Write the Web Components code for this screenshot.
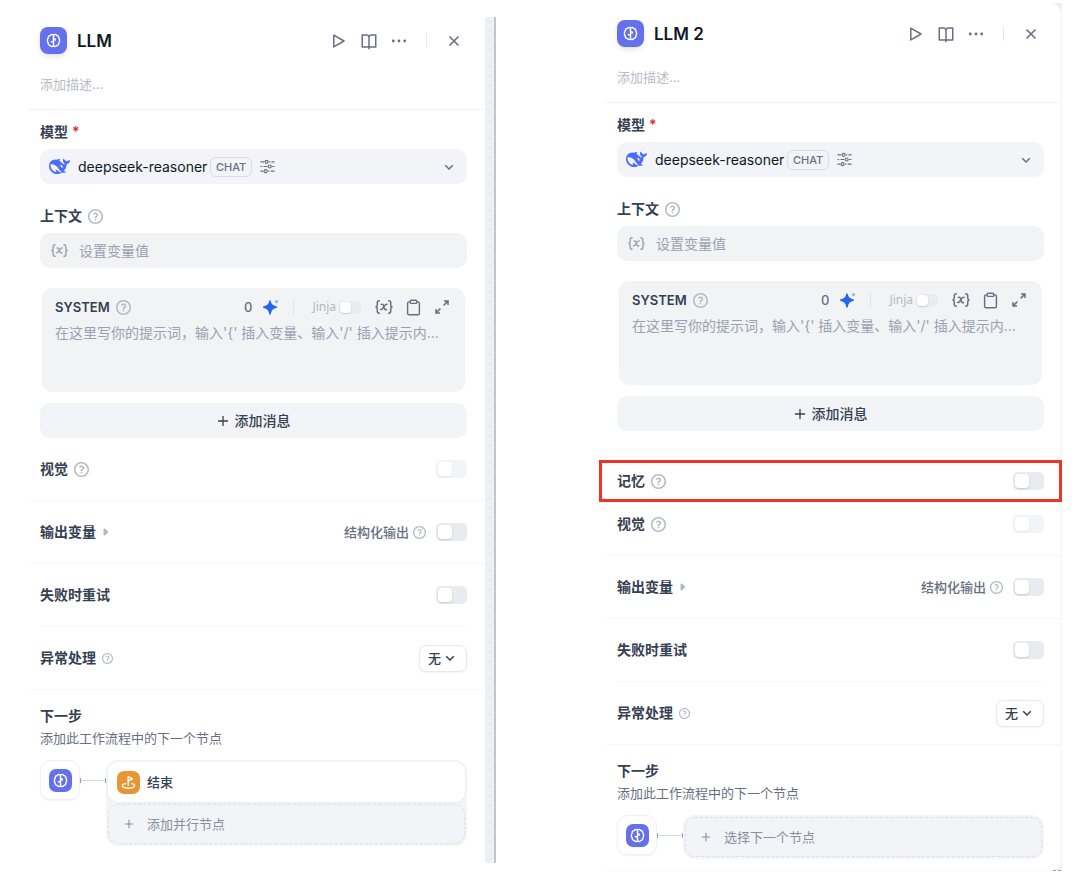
<!DOCTYPE html>
<html lang="zh-CN">
<head>
<meta charset="utf-8">
<meta name="viewport" content="width=device-width, initial-scale=1">
<title>LLM 节点设置</title>
<style>
  body {
    margin: 0;
    background: #fff;
    color: #354052;
    font: 14px/20px Inter, "Noto Sans CJK SC", sans-serif;
    --muted: #676f83;
    --faint: #98a2b2;
    --line: #f6f7f8;
    --fill: #f2f4f7;
  }
</style>
</head>
<body>
<node-compare>
  <node-panel slot="before" heading="LLM" class="first">
    <model-field></model-field>
    <context-field></context-field>
    <prompt-editor></prompt-editor>
    <add-message></add-message>
    <setting-row slot="settings" label="视觉" help="15" disabled></setting-row>
    <setting-row slot="settings" label="输出变量" expandable note="结构化输出"></setting-row>
    <setting-row slot="settings" label="失败时重试" inset></setting-row>
    <setting-row slot="settings" label="异常处理" help="11" choice="无"></setting-row>
    <next-step slot="next">
      <step-item>结束</step-item>
      <step-item add>添加并行节点</step-item>
    </next-step>
  </node-panel>
  <node-panel slot="after" heading="LLM 2" class="second">
    <model-field></model-field>
    <context-field></context-field>
    <prompt-editor></prompt-editor>
    <add-message></add-message>
    <setting-row slot="settings" label="记忆" help="15" marked></setting-row>
    <setting-row slot="settings" label="视觉" help="15" disabled></setting-row>
    <setting-row slot="settings" label="输出变量" expandable note="结构化输出"></setting-row>
    <setting-row slot="settings" label="失败时重试" inset></setting-row>
    <setting-row slot="settings" label="异常处理" help="11" choice="无"></setting-row>
    <next-step slot="next">
      <step-item add>选择下一个节点</step-item>
    </next-step>
  </node-panel>
</node-compare>

<script>
const ICONS = {
  brain: ['0 0 16 16', '<g fill="none" stroke="currentColor" stroke-width="1.5" stroke-linecap="round" stroke-linejoin="round"><path d="M8 2v12M8 2.200C6.900 1.200 5.200 1.400 4.400 2.700 3 2.800 2.100 4 2.400 5.300 1.200 6.400 1.200 9.500 2.400 10.600c-.3 1.400.6 2.600 2 2.700.8 1.300 2.500 1.500 3.600.500 1.100 1 2.800.800 3.600-.500 1.400-.100 2.300-1.300 2-2.700 1.200-1.100 1.200-4.200 0-5.300.300-1.300-.600-2.500-2-2.600C10.800 1.400 9.100 1.200 8 2.200M7.800 9.400H5.700M8.200 6.400h1.600v1.300"/></g>'],
  flag: ['0 0 16 16', '<g fill="none" stroke="currentColor" stroke-width="1.4" stroke-linecap="round" stroke-linejoin="round"><path d="M7.600 11V1.800l4.600 2.300-4.600 2.400M4.700 9.100c-2 .4-3.300 1.200-3.300 2.200 0 1.600 2.900 2.800 6.600 2.800s6.600-1.200 6.600-2.800c0-1-1.200-1.800-3.200-2.200"/></g>'],
  whale: ['0 0 24 24', '<path fill="#4d6bfe" d="M23.748 4.482c-.254-.124-.364.113-.512.234-.051.039-.094.09-.137.136-.372.397-.806.657-1.373.626-.829-.046-1.537.214-2.163.848-.133-.782-.575-1.248-1.247-1.548-.352-.156-.708-.311-.955-.65-.172-.241-.219-.51-.305-.774-.055-.16-.11-.323-.293-.35-.2-.031-.278.136-.356.276-.313.572-.434 1.202-.422 1.84.027 1.436.633 2.58 1.838 3.393.137.093.172.187.129.323-.082.28-.18.552-.266.833-.055.179-.137.217-.329.14a5.526 5.526 0 01-1.736-1.18c-.857-.828-1.631-1.742-2.597-2.458a11.365 11.365 0 00-.689-.471c-.985-.957.13-1.743.388-1.836.27-.098.093-.432-.779-.428-.872.004-1.67.295-2.687.684a3.055 3.055 0 01-.465.137 9.597 9.597 0 00-2.883-.102c-1.885.21-3.39 1.102-4.497 2.623C.082 8.606-.231 10.684.152 12.85c.403 2.284 1.569 4.175 3.36 5.653 1.858 1.533 3.997 2.284 6.438 2.14 1.482-.085 3.133-.284 4.994-1.86.47.234.962.327 1.78.397.63.059 1.236-.03 1.705-.128.735-.156.684-.837.419-.961-2.155-1.004-1.682-.595-2.113-.926 1.096-1.296 2.746-2.642 3.392-7.003.05-.347.007-.565 0-.845-.004-.17.035-.237.23-.256a4.173 4.173 0 001.545-.475c1.396-.763 1.96-2.015 2.093-3.517.02-.23-.004-.467-.247-.588zM11.581 18c-2.089-1.642-3.102-2.183-3.52-2.16-.392.024-.321.471-.235.763.09.288.207.486.371.739.114.167.192.416-.113.603-.673.416-1.842-.14-1.897-.167-1.361-.802-2.5-1.86-3.301-3.307-.774-1.393-1.224-2.887-1.298-4.482-.02-.386.093-.522.477-.592a4.696 4.696 0 011.529-.039c2.132.312 3.946 1.265 5.468 2.774.868.86 1.525 1.887 2.202 2.891.72 1.066 1.494 2.082 2.48 2.914.348.292.625.514.891.677-.802.09-2.14.11-3.054-.614zm1-6.44a.306.306 0 01.415-.287.302.302 0 01.2.288.306.306 0 01-.31.307.303.303 0 01-.304-.308zm3.11 1.596c-.2.081-.399.151-.59.16a1.245 1.245 0 01-.798-.254c-.274-.23-.47-.358-.552-.758a1.73 1.73 0 01.016-.588c.07-.327-.008-.537-.239-.727-.187-.156-.426-.199-.688-.199a.559.559 0 01-.254-.078c-.11-.054-.2-.19-.114-.358.028-.054.16-.186.192-.21.356-.202.767-.136 1.146.016.352.144.618.408 1.001.782.391.451.462.576.685.914.176.265.336.537.445.848.067.195-.019.354-.25.452z"/>'],
  play: ['0 0 18 18', '<path fill="none" stroke="currentColor" stroke-width="1.5" stroke-linejoin="round" d="M3.800 3.100v11.800L14 9z"/>'],
  book: ['0 0 24 24', '<path fill="currentColor" d="M13 21V23H11V21H3C2.448 21 2 20.552 2 20V4C2 3.448 2.448 3 3 3H9C10.195 3 11.267 3.524 12 4.354C12.733 3.524 13.805 3 15 3H21C21.552 3 22 3.448 22 4V20C22 20.552 21.552 21 21 21H13ZM20 19V5H15C13.895 5 13 5.895 13 7V19H20ZM11 19V7C11 5.895 10.105 5 9 5H4V19H11Z"/>'],
  dots: ['0 0 18 18', '<g fill="currentColor"><circle cx="3.300" cy="9" r="1.400"/><circle cx="9" cy="9" r="1.400"/><circle cx="14.700" cy="9" r="1.400"/></g>'],
  close: ['0 0 18 18', '<path fill="none" stroke="currentColor" stroke-width="1.600" d="M4.500 4.500l9 9m0-9l-9 9"/>'],
  help: ['2 2 20 20', '<path fill="currentColor" d="M12 22C6.477 22 2 17.523 2 12C2 6.477 6.477 2 12 2C17.523 2 22 6.477 22 12C22 17.523 17.523 22 12 22ZM12 20C16.418 20 20 16.418 20 12C20 7.582 16.418 4 12 4C7.582 4 4 7.582 4 12C4 16.418 7.582 20 12 20ZM11 15H13V17H11V15ZM13 13.355V14H11V12.5C11 11.948 11.448 11.5 12 11.5C12.828 11.5 13.5 10.828 13.5 10C13.5 9.172 12.828 8.5 12 8.5C11.272 8.5 10.666 9.018 10.529 9.706L8.567 9.313C8.886 7.709 10.302 6.5 12 6.5C13.933 6.5 15.5 8.067 15.5 10C15.5 11.586 14.446 12.925 13 13.355Z"/>'],
  tune: ['0 0 16 16', '<g fill="none" stroke="currentColor" stroke-width="1.300"><path d="M0.500 3h3.800M9.700 3h1.300M12.200 3h3.300M0.500 8h1.800M3.700 8h4M13 8h2.500M0.500 13h3M8.700 13h1.300M11.300 13h4.200"/><circle cx="7" cy="3" r="1.600"/><circle cx="10.300" cy="8" r="1.600"/><circle cx="6" cy="13" r="1.600"/></g>'],
  chevron: ['0 0 10 10', '<path fill="none" stroke="currentColor" stroke-width="1.500" d="M1.200 3.200L5 7l3.800-3.800"/>'],
  variable: ['0 0 18 16', '<g fill="none" stroke="currentColor" stroke-width="1.500" stroke-linecap="round" stroke-linejoin="round"><path d="M4.300 1.800c-1.700 0-2 .8-2 2v2c0 1.200-.4 1.800-1.300 2.200.9.400 1.300 1 1.300 2.200v2c0 1.200.3 2 2 2M13.700 1.800c1.700 0 2 .8 2 2v2c0 1.200.4 1.800 1.300 2.200-.9.400-1.300 1-1.300 2.200v2c0 1.200-.3 2-2 2"/><path d="M6.400 5.400c1.500-.5 2 .3 2.400 2.100.4 2 1 3.700 2.700 3M12 5.200c-1.500-.2-2.200.8-3.100 2.300s-1.700 3.300-3.200 3"/></g>'],
  sparkle: ['0 0 16 16', '<path fill="#2563f0" d="M7 2c.8 3.600 2 5 6.500 6.100C9 9.200 7.800 11 7 15c-.8-4-2-5.800-6.500-6.900C5 7 6.200 5.600 7 2z" stroke="#2563f0" stroke-width="1.300" stroke-linejoin="round"/><circle cx="13.500" cy="2.600" r="1.700" fill="#9db6f8"/>'],
  clipboard: ['0 0 16 18', '<g fill="none" stroke="currentColor" stroke-width="1.500" stroke-linejoin="round"><path d="M4.500 3H3.300A1.600 1.600 0 0 0 1.700 4.600v10.600a1.600 1.600 0 0 0 1.600 1.600h9.400a1.600 1.600 0 0 0 1.600-1.600V4.600A1.600 1.600 0 0 0 12.700 3h-1.200"/><rect x="4.500" y="1.300" width="7" height="3.300" rx="1"/></g>'],
  expand: ['0 0 16 16', '<path fill="none" stroke="currentColor" stroke-width="1.500" d="M10 2h4v4M13.800 2.200L9.600 6.400M2 10v4h4M2.200 13.800l4.200-4.200"/>'],
  plus: ['0 0 12 12', '<path fill="none" stroke="currentColor" stroke-width="1.300" d="M6 1v10M1 6h10"/>'],
  caret: ['0 0 6 8', '<path fill="currentColor" stroke="currentColor" stroke-linejoin="round" d="M1 1h.8L5 4 1.800 7H1z"/>']
};

const define = (name, css, markup) => customElements.define(name, class extends HTMLElement {
  connectedCallback() {
    if (this.shadowRoot) return;
    const template = document.createElement('template');
    template.innerHTML = `<style>*{box-sizing:border-box}button,input,select,textarea{font:inherit;color:inherit;margin:0;padding:0;border:0;background:none;outline:0}${css}</style>` +
      (typeof markup === 'function' ? markup(this) : markup);
    this.attachShadow({ mode: 'open' }).append(template.content.cloneNode(true));
  }
});

define('ui-icon', ':host{display:inline-flex;flex:none}svg{display:block}', el => {
  const [box, body] = ICONS[el.getAttribute('name')];
  const w = el.getAttribute('size') || 16;
  return `<svg aria-hidden="true" width="${w}" height="${el.getAttribute('tall') || w}" viewBox="${box}">${body}</svg>`;
});

define('help-tip', ':host{display:inline-flex;flex:none;color:#b4b8c1}', el =>
  `<ui-icon name="help" size="${el.getAttribute('size') || 15}"></ui-icon>`);

define('node-badge', `
  :host{display:inline-flex;flex:none;width:27px;height:27px;border-radius:8px;align-items:center;justify-content:center;
    background:#6570ee;color:#fff;box-shadow:0 3px 6px -2px #1018282e}
  :host([small]){width:23px;height:23px;border-radius:7px;box-shadow:none}
  :host([kind=flag]){background:#e99536}`, el =>
  `<ui-icon name="${el.getAttribute('kind') || 'brain'}" size="15"></ui-icon>`);

define('node-compare', `
  :host{display:grid;grid-template-columns:minmax(0,468fr) minmax(0,457fr);column-gap:109px;align-items:start;padding:0 18px 0 28px}
  .before{display:flex;margin-top:17px}
  .before ::slotted(*){flex:1;min-width:0}
  .canvas{flex:none;width:11px;border-right:2px solid #c3c5c8;
    background:radial-gradient(circle at 5px 5px,#e3e5ea 1px,transparent 1px) 0 0/9px 9px repeat-y #eff0f4}
  .after{position:relative;margin-top:3px;background:#eeeff4}
  .grip{position:absolute;right:1px;bottom:0;width:8px;border-bottom:1px dashed #9a9da3}
  `, `
  <div class="before"><slot name="before"></slot><div class="canvas"></div></div>
  <div class="after"><slot name="after"></slot><span class="grip"></span></div>`);

define('node-panel', `
  :host{display:block;background:#fff;padding:10px 0 17px}
  :host(.second){padding:17px 0 11px;border-radius:0 12px 12px 0;border-bottom:1px solid #fafafb;box-shadow:inset -1px 0 #f6f6f9}
  header{padding:0 18px 14px 12px;border-bottom:1px solid #f2f3f5}
  .bar{display:flex;align-items:center;height:27px}
  h2{flex:1;margin:0 0 0 10px;font-size:17px;line-height:24px;font-weight:600;color:#101828}
  button{width:30px;height:26px;display:flex;align-items:center;justify-content:center;color:var(--muted)}
  .close{width:27px}
  .rule{width:1px;height:15px;background:#e6e8ec;margin:0 13px 0 12px}
  .about{display:block;width:100%;height:20px;margin-top:20px;margin-bottom:1px;font-size:13px}
  .about::placeholder{color:#b8bcc5;opacity:1}
  .fields{padding:12px 18px 0 12px}
  `, el => `
  <header>
    <div class="bar"><node-badge></node-badge><h2>${el.getAttribute('heading')}</h2>
      <button aria-label="运行"><ui-icon name="play" size="18"></ui-icon></button>
      <button aria-label="文档"><ui-icon name="book" size="18"></ui-icon></button>
      <button aria-label="更多"><ui-icon name="dots" size="18"></ui-icon></button>
      <span class="rule"></span>
      <button class="close" aria-label="关闭"><ui-icon name="close" size="18"></ui-icon></button>
    </div>
    <input class="about" aria-label="描述" placeholder="添加描述...">
  </header>
  <div class="fields"><slot></slot></div>
  <slot name="settings"></slot>
  <slot name="next"></slot>`);

define('model-field', `
  :host{display:block}
  .name{display:block;font-weight:600;margin-bottom:7px}
  .star{color:#d92d20;margin-left:4px}
  .box{display:flex;align-items:center;height:35px;padding:0 13px 0 9px;border-radius:10px;background:var(--fill);color:var(--muted)}
  select{appearance:none;margin-left:8px;color:#101828}
  .tag{height:20px;margin:0 8px 0 2px;padding:0 5px;border:1px solid #d9dce3;border-radius:6px;font-size:11px;line-height:18px;font-weight:500}
  button{display:flex}
  .open{margin-left:auto}`, `
  <label class="name" for="model">模型<span class="star">*</span></label>
  <div class="box"><ui-icon name="whale" size="21"></ui-icon>
    <select id="model"><option>deepseek-reasoner</option></select>
    <span class="tag">CHAT</span>
    <button aria-label="模型参数"><ui-icon name="tune" size="15"></ui-icon></button>
    <ui-icon class="open" name="chevron" size="10"></ui-icon>
  </div>`);

define('context-field', `
  :host{display:block;margin-top:22px}
  .name{display:flex;align-items:center;gap:6px;font-weight:600;margin-bottom:7px}
  .box{display:flex;align-items:center;gap:11px;height:35px;padding:0 11px;border-radius:10px;background:#f2f3f5;color:var(--faint)}
  input{flex:1;min-width:0}
  input::placeholder{color:var(--faint);opacity:1}`, `
  <label class="name" for="context">上下文<help-tip></help-tip></label>
  <div class="box"><ui-icon name="variable" size="17" tall="15"></ui-icon><input id="context" placeholder="设置变量值"></div>`);

const SWITCH = `
  .switch{appearance:none;flex:none;display:block;width:31px;height:18px;border-radius:5px;background:#e9ebf0;padding:2px}
  .switch::before{content:"";display:block;width:14px;height:14px;border-radius:4px;background:#fff;box-shadow:0 1px 2px #10182826}
  .switch:checked{background:#2563f0}
  .switch:checked::before{margin-left:auto}
  .switch:disabled{opacity:.5}`;

define('prompt-editor', `${SWITCH}
  :host{display:block;margin:20px 2px 0;padding:9px 15px 0 13px;height:104px;box-sizing:border-box;border-radius:10px;background:#f2f3f5}
  .bar{display:flex;align-items:center;height:20px;color:var(--muted)}
  label.role{display:flex;align-items:center;gap:6px;font-size:13px;font-weight:600;color:#354052;margin-right:auto}
  .count{font-weight:500;font-size:13px;margin-right:11px}
  .rule{width:1px;height:15px;background:#e1e3e8;margin:0 18px 0 14px}
  .jinja{display:flex;align-items:center;gap:3px;margin-right:14px;font:12px/20px "Noto Sans",sans-serif;color:#b4b8c1}
  .switch{width:22px;height:13px;border-radius:5px;padding:1px}
  .switch::before{width:11px;height:11px}
  .tools{display:flex;align-items:center;gap:13px}
  button{display:flex}
  textarea{display:block;width:100%;height:52px;margin-top:6px;resize:none;overflow:hidden}
  textarea::placeholder{color:var(--faint);opacity:1}`, `
  <div class="bar">
    <label class="role" for="prompt">SYSTEM<help-tip></help-tip></label>
    <span class="count">0</span>
    <button aria-label="生成提示词"><ui-icon name="sparkle" size="16"></ui-icon></button>
    <span class="rule"></span>
    <label class="jinja">Jinja<input class="switch" type="checkbox"></label>
    <div class="tools">
      <button aria-label="插入变量"><ui-icon name="variable" size="18" tall="16"></ui-icon></button>
      <button aria-label="复制"><ui-icon name="clipboard" size="15" tall="17"></ui-icon></button>
      <button aria-label="展开"><ui-icon name="expand" size="16"></ui-icon></button>
    </div>
  </div>
  <textarea id="prompt" placeholder="在这里写你的提示词，输入'{' 插入变量、输入'/' 插入提示内..."></textarea>`);

define('add-message', `
  :host{display:block;margin-top:11px}
  button{display:flex;align-items:center;justify-content:center;gap:6px;width:100%;height:35px;border-radius:10px;background:var(--fill);font-weight:500;color:#354052}`,
  `<button><ui-icon name="plus" size="12"></ui-icon>添加消息</button>`);

define('setting-row', `${SWITCH}
  :host{display:block;padding:0 18px 0 12px;border-bottom:1px solid var(--line)}
  :host([inset]),:host([marked]){border-bottom:0}
  .row{position:relative;display:flex;align-items:center;height:62px}
  :host([inset]) .row{height:63px;border-bottom:1px solid var(--line)}
  .name{display:flex;align-items:center;font-weight:600;margin-right:auto}
  .name help-tip{margin-left:6px}
  .name ui-icon{margin-left:7px;color:#b4b8c1}
  .note{display:flex;align-items:center;gap:4px;margin-right:10px;font-size:13px;font-weight:500;color:var(--muted)}
  .choice{position:relative;display:flex;align-items:center}
  select{appearance:none;height:27px;padding:0 24px 0 8px;border:1px solid #e6e8ec;border-radius:7px;background:#fff;font-size:13px;font-weight:500;box-shadow:0 1px 2px #1018280d}
  .choice ui-icon{position:absolute;right:12px;pointer-events:none}
  :host([marked]) .edge{height:19px;border-bottom:1px solid var(--line)}
  :host([marked]) .row{height:20px;margin:21px 0 2px}
  :host([marked]) .row::after{content:"";position:absolute;inset:-11px -18px;border:3px solid #ee3424;pointer-events:none}`, el => {
  const a = n => el.getAttribute(n), off = el.hasAttribute('disabled') ? 'disabled' : '';
  const control = a('choice')
    ? `<span class="choice"><select id="control"><option>${a('choice')}</option></select><ui-icon name="chevron" size="10"></ui-icon></span>`
    : `<input class="switch" id="control" type="checkbox" ${off}>`;
  const name = `${a('label')}${a('help') ? `<help-tip size="${a('help')}"></help-tip>` : ''}`;
  return `${el.hasAttribute('marked') ? '<div class="edge"></div>' : ''}
  <div class="row">
    ${a('note')
      ? `<span class="name">${name}<ui-icon name="caret" size="6" tall="8"></ui-icon></span>
         <label class="note" for="control">${a('note')}<help-tip size="13"></help-tip></label>`
      : `<label class="name" for="control">${name}</label>`}
    ${control}
  </div>`;
});

define('next-step', `
  :host{display:block;padding:16px 18px 0 12px}
  h3{margin:0;font-size:14px;line-height:20px;font-weight:600}
  p{margin:2px 0 12px;font-size:13px;line-height:20px;color:var(--muted)}
  .flow{display:flex;align-items:flex-start}
  .origin{flex:none;display:flex;align-items:center;justify-content:center;width:40px;height:40px;border:1px solid #f0f1f4;border-radius:10px;box-shadow:0 1px 2px #1018280d}
  .link{flex:none;width:26px;height:5px;margin-top:18px;border:solid #98a2b2;border-width:0 1px;background:linear-gradient(#d3d6dd,#d3d6dd) 0 2px/100% 1px no-repeat}
  .steps{flex:1;min-width:0;display:grid;gap:2px;padding:2px;border-radius:12px;background:var(--fill)}`, `
  <h3>下一步</h3>
  <p>添加此工作流程中的下一个节点</p>
  <div class="flow"><span class="origin"><node-badge small></node-badge></span><span class="link"></span>
    <div class="steps"><slot></slot></div></div>`);

define('step-item', `
  :host{display:block}
  button{display:flex;align-items:center;width:100%;height:40px;padding:0 9px;border-radius:10px;font-size:13px}
  .node{gap:7px;background:#fff;font-weight:500;box-shadow:0 1px 2px #1018280d}
  .add{gap:13px;padding-left:15px;border:1px dashed #dcdfe5;color:#8790a2}`, el =>
  el.hasAttribute('add')
    ? `<button class="add"><ui-icon name="plus" size="10"></ui-icon><slot></slot></button>`
    : `<button class="node"><node-badge small kind="flag"></node-badge><slot></slot></button>`);
</script>
</body>
</html>
